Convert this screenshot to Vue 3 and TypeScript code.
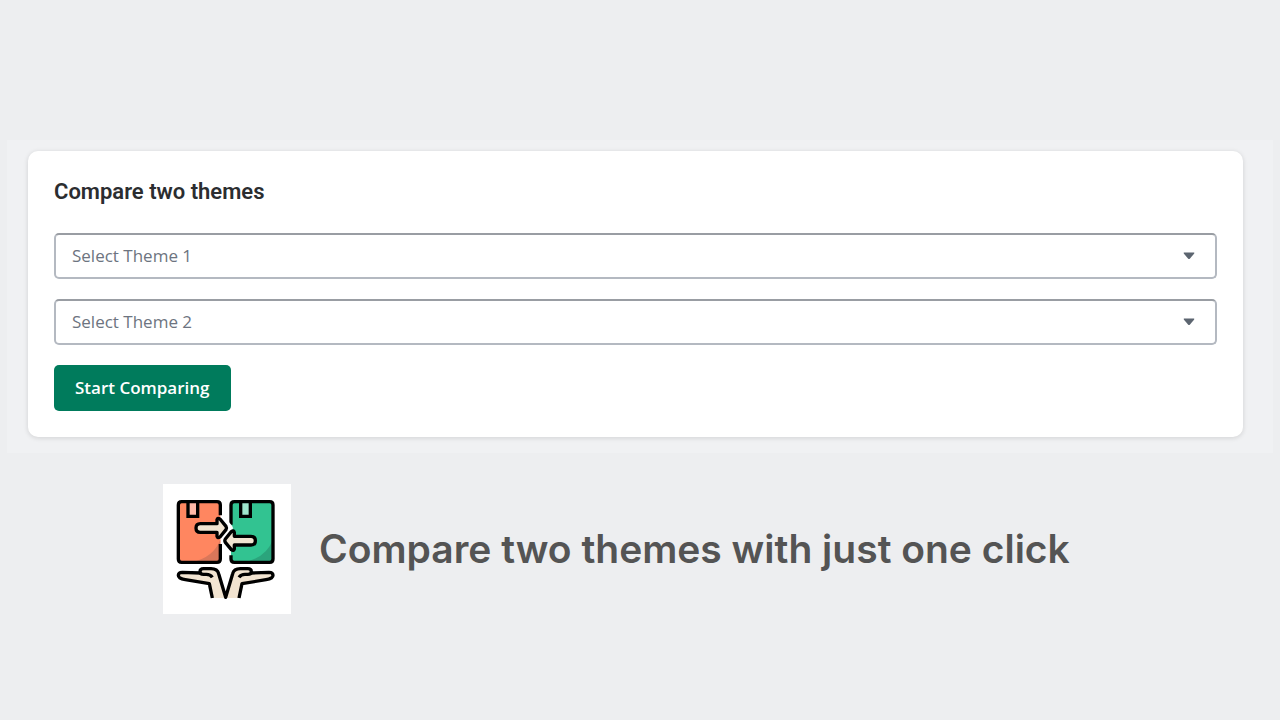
<script setup lang="ts">
import { ref } from 'vue'

interface ThemeField {
  id: string
  label: string
}

const fields: ThemeField[] = [
  { id: 'theme-1', label: 'Select Theme 1' },
  { id: 'theme-2', label: 'Select Theme 2' },
]
const selected = ref<string[]>(['', ''])
</script>

<template>
  <main class="page">
    <section class="panel">
      <form class="card" @submit.prevent>
        <h1 class="title">Compare two themes</h1>
        <div v-for="(field, i) in fields" :key="field.id" class="field">
          <select :id="field.id" v-model="selected[i]" class="select" :aria-label="field.label">
            <option value="">{{ field.label }}</option>
          </select>
          <svg class="caret" viewBox="0 0 12 8" aria-hidden="true">
            <path d="M1 0.5H11Q11.8 0.8 11 1.8L7 6.6Q6 7.6 5 6.6L1 1.8Q0.2 0.8 1 0.5Z" />
          </svg>
        </div>
        <button class="submit" type="submit">Start Comparing</button>
      </form>
    </section>

    <section class="promo">
      <svg class="logo" viewBox="24 24 384 390" aria-hidden="true">
        <rect x="24" y="24" width="384" height="390" fill="#fff" />
        <!-- boxes -->
        <rect x="70" y="77" width="126" height="182" rx="8" fill="#ff8660" />
        <path d="M196 190V251Q196 259 188 259H108Q176 246 196 190Z" fill="#d9775a" />
        <rect x="228" y="77" width="126" height="182" rx="8" fill="#32c391" />
        <path d="M354 190V251Q354 259 346 259H266Q334 246 354 190Z" fill="#2ba47c" />
        <rect x="99" y="78" width="29" height="43" fill="#ffb9a8" />
        <rect x="257" y="78" width="29" height="43" fill="#9fe5cd" />
        <g fill="none" stroke="#000" stroke-width="10" stroke-linejoin="round">
          <path d="M196 118V87Q196 77 186 77H80Q70 77 70 87V249Q70 259 80 259H186Q196 259 196 249V204" />
          <path d="M228 146V87Q228 77 238 77H344Q354 77 354 87V249Q354 259 344 259H238Q228 259 228 249V238" />
          <path d="M99 78V121H128V78M257 78V121H286V78" stroke-linejoin="miter" />
        </g>
        <!-- exchange arrows, with a light gap around them -->
        <g stroke-linejoin="round">
          <path d="M201 112L232 151Q236 156 232 161L214 184L201 198Z" fill="#fff" />
          <path d="M223 238L202 201Q198 194 202 187L221 148Z" fill="#fff" />
          <g fill="#f2e4d1" stroke="#000" stroke-width="10">
            <path d="M136 143H186V131Q188 124 195 129L213 151Q216 156 213 161L195 183Q188 188 186 181V169H136Q123 169 123 156T136 143Z" />
            <path d="M288 181H238V169Q236 162 229 167L211 189Q208 194 211 199L229 221Q236 226 238 219V207H288Q301 207 301 194T288 181Z" />
          </g>
        </g>
        <!-- hands -->
        <g fill="#f2e4d1">
          <path d="M172 366L163 325L91 311Q70 308 70 298Q70 288 82 288L134 290Q132 278 144 278H171Q188 278 193 293L212 353L231 293Q236 278 253 278H280Q292 278 290 290L342 288Q354 288 354 298Q354 308 333 311L261 325L252 366H215L212 355L209 366Z" />
          <g fill="none" stroke="#000" stroke-width="10" stroke-linejoin="round">
            <path d="M172 366L163 323L91 311Q70 308 70 298Q70 289 82 289L136 291" />
            <path d="M172 304Q166 295 154 295H146Q135 295 135 287Q135 278 146 278H168Q187 278 191 293L212 364L233 293Q237 278 256 278H278Q289 278 289 287Q289 295 278 295H270Q258 295 252 304" />
            <path d="M252 366L261 323L333 311Q354 308 354 298Q354 289 342 289L288 291" />
          </g>
        </g>
      </svg>
      <p class="tagline">Compare two themes with just one click</p>
    </section>
  </main>
</template>

<style>
body {
  margin: 0;
  background: #edeef0;
}
</style>

<style scoped>
.page {
  box-sizing: border-box;
  min-height: 100vh;
  padding: 140px 7px 0;
  background: #edeef0;
}

.panel {
  padding: 11px 30px 16px 21px;
  background: #f0f1f3;
}

.card {
  display: flex;
  flex-direction: column;
  align-items: flex-start;
  gap: 20px;
  padding: 26px;
  border-radius: 10px;
  background: #fff;
  box-shadow: 0 1px 5px rgba(23, 24, 24, 0.14);
}

.title {
  margin: 0 0 6px;
  color: #2b2d30;
  font: 600 22px/30px "Roboto", "Liberation Sans", sans-serif;
}

.field {
  display: flex;
  align-items: center;
  width: 100%;
}

.select {
  box-sizing: border-box;
  flex: 1;
  height: 46px;
  margin: 0;
  padding: 0 48px 0 16px;
  appearance: none;
  border: 2px solid #b4b9c1;
  border-top-color: #999da3;
  border-radius: 5px;
  background: #fff;
  color: #6d7480;
  font: 400 17px/26px "Open Sans", "Noto Sans", sans-serif;
}

.caret {
  width: 12px;
  height: 8px;
  margin-left: -34px;
  margin-right: 22px;
  fill: #5c6570;
  pointer-events: none;
}

.submit {
  height: 46px;
  padding: 0 21px;
  border: 0;
  border-radius: 5px;
  background: #007b5c;
  color: #fff;
  font: 600 17px/26px "Open Sans", "Noto Sans", sans-serif;
}

.promo {
  display: flex;
  align-items: center;
  gap: 28px;
  padding: 31px 12px 0 156px;
}

.logo {
  flex: none;
  width: 128px;
  height: 130px;
}

.tagline {
  margin: 0;
  color: #545454;
  font: 600 39px/48px "Inter", "Liberation Sans", sans-serif;
}
</style>
